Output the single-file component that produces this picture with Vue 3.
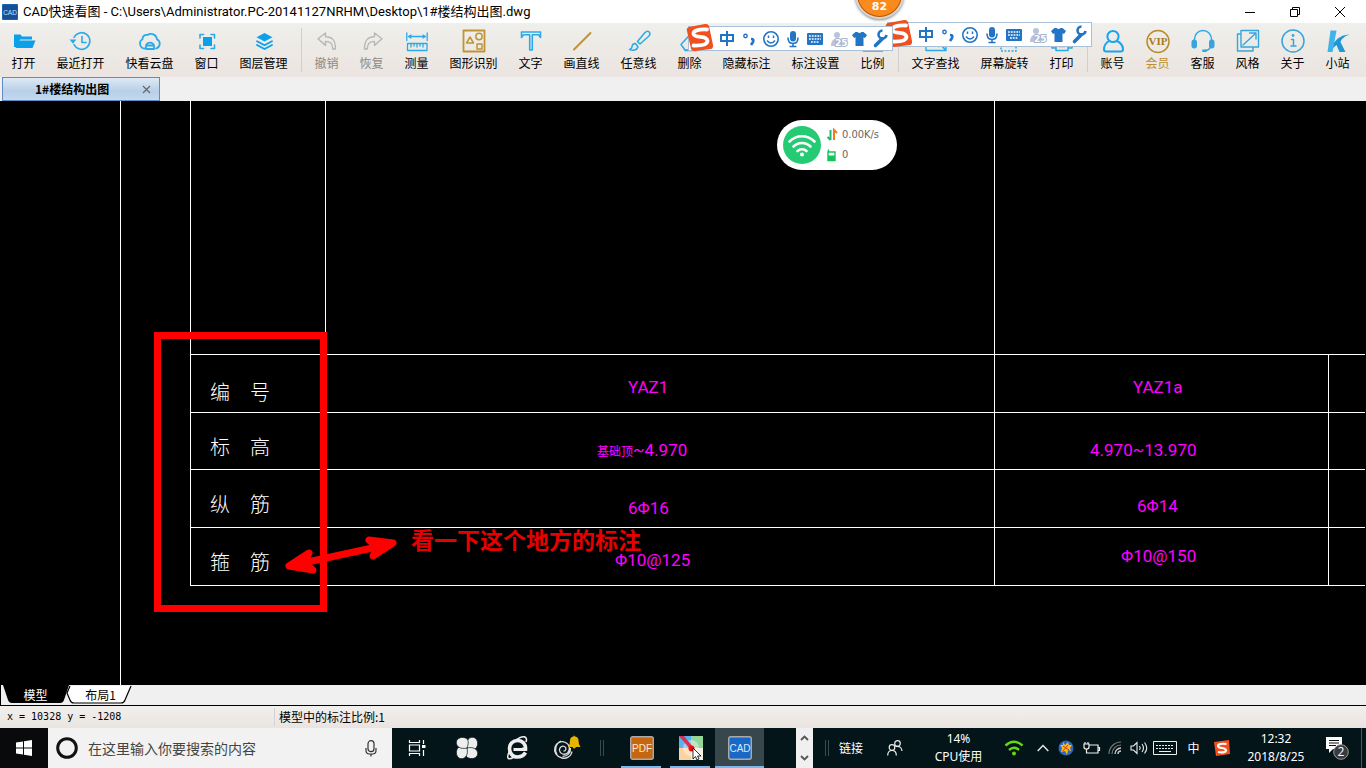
<script setup>
const B = '#2aaae8'
const G = '#bf9436'
const line = (d, c = B, w = 1.6) =>
  `<path d="${d}" fill="none" stroke="${c}" stroke-width="${w}" stroke-linecap="round" stroke-linejoin="round"/>`

const icons = {
  open: '<path d="M2 5.500h6.500l1.500 2h10v3H8L4.500 18H2z" fill="#0ba0ea"/><path d="M6.500 11.500h17L20.500 19H3.500z" fill="#0ba0ea"/>',
  recent: line('M5 8.500a8.300 8.300 0 1 1 0 7M13 7.500v6h4') + '<path d="M.500 10.500h6.800L4 14.800z" fill="#2aaae8"/>',
  cloud: line('M6.500 19.500a5 5 0 0 1-2-9.300a4 4 0 0 1 5-4.200a6 6 0 0 1 9.500 4.200a5 5 0 0 1-1 9.300M8 20v-3.500a4.200 4.200 0 0 1 8 0V20zM8 16.500h8', B, 1.8),
  fit: '<path d="M8 8h9v9H8z" fill="#0ba0ea"/>' + line('M5 9V5.500h3.500M16 5.500h3.500V9M19.500 16v3.500H16M8.500 19.500H5V16', B, 1.6),
  layers: '<path d="M12.500 4l8 4.300-8 4.300-8-4.300z" fill="#0ba0ea"/>' + line('M5 12.300l7.500 4 7.500-4M5 16l7.500 4 7.500-4', '#0ba0ea', 1.8),
  undo: line('M3 9.800L10.500 4v3.800c7 0 10 3.500 10 12.200h-2.800c0-5-2-7.600-7.200-7.600v4z', '#b7b7b5', 1.4),
  redo: line('M22 9.800L14.500 4v3.800c-7 0-10 3.500-10 12.200h2.800c0-5 2-7.600 7.200-7.600v4z', '#b7b7b5', 1.4),
  measure: line('M1.800 4v7.500M22.200 4v7.500M4 7.500h16M6 6L3.500 7.500L6 9M18 6l2.500 1.500L18 9M2.500 14.500h19.500v7H2.500zM6 15v3M9 15v2M12 15v3M15 15v2M18 15v3', B, 1.3),
  shapes: line('M1.500 1.500h21v21h-21z', G, 1.8) + line('M8 8l3.500 6H4.500zM15 15h5v5h-5z', G, 1.5) + `<circle cx="17" cy="7.500" r="3.200" fill="none" stroke="${G}" stroke-width="1.500"/>`,
  text: line('M2.500 3h19v5.500l-2-2.800h-6.200V21h-2.600V5.700H4.500L2.500 8.500z', B, 1.6),
  draw: line('M4 20.500L20.500 4', G, 1.9),
  brush: line('M22 2.800c-1.500-1.300-3-.300-4 .700l-7.500 9 2.500 2.500 9-8c1-1.300 1.500-2.800 0-4.200zM8.500 14.500c-2.500 0-3.500 2-3.500 3.500s-1.500 2-2.500 2.500c3 1.200 7.500 1 8.500-2.500z', B, 1.5),
  erase: line('M3 15.500l10-11 8 7.500-8 9H7zM7 21.500h12', B, 1.5),
  hide: line('M4 20l14-16M6 13l6 7M4.500 20.500v1', B, 1.4),
  setting: line('M5 21l7-16 7 16M9 21l3-5M7 14h10', B, 1.4),
  scale: line('M2.500 4h19v18h-19zM6 16h12', B, 1.6),
  find: line('M2 5h20v16.500H2zM6 12h6M6 16h5', B, 1.4) + `<circle cx="15" cy="14" r="3.500" fill="none" stroke="${B}" stroke-width="1.500"/>` + line('M18 17l3.500 4', B, 1.8),
  rotate: `<rect x="8" y="8" width="15" height="14" fill="none" stroke="${B}" stroke-width="1.500" stroke-dasharray="2 1.500"/>` + line('M2 17h4', B, 1.3),
  print: line('M5 8V3h14v5M5 19H2V9h20v10h-3M6 14h12v7.500H6zM9 17.500h6', B, 1.6),
  user: `<circle cx="12" cy="7.500" r="5.600" fill="none" stroke="#18a5f0" stroke-width="2"/>` + line('M8 12c-3.500 2-5 5-5 8.500 0 1.500 1 2 2.500 2h14c1.500 0 2.500-.500 2.500-2 0-3.500-2-6.500-6-8.500', '#18a5f0', 2),
  vip: `<circle cx="12" cy="12.500" r="11" fill="none" stroke="#b98b2b" stroke-width="1.500"/><text x="12" y="16" text-anchor="middle" font-family="Liberation Serif, serif" font-weight="bold" font-size="11" fill="#a87a1b">VIP</text>`,
  service: line('M3.500 13V10a8.500 8.500 0 0 1 17 0v3M20 17c-1 3-3 4.500-6 4.500', B, 1.5) + '<rect x=".500" y="10.500" width="5.500" height="9" rx="2.700" fill="#37a5dc"/><rect x="18" y="10.500" width="5.500" height="9" rx="2.700" fill="#37a5dc"/><rect x="11" y="20.500" width="5" height="2.600" rx="1.300" fill="#37a5dc"/>',
  style: line('M8 1.500h14.500V18H8M5 5H1.500v17H17v-3M5 1.500V18h3M6 1.500h2M7 16L20 4M13.500 4H20v6', '#37a5dc', 1.4),
  about: '<circle cx="12" cy="12" r="11" fill="none" stroke="#37a5dc" stroke-width="1.500"/><circle cx="12" cy="6.500" r="1.400" fill="#37a5dc"/>' + line('M10.500 10.500h2V17M10 17h5', '#37a5dc', 1.5),
  site: '<path d="M4.500 1.500h6L6.500 23H1.500z" fill="#3fb4ea"/><path d="M8 14C11 9 17 5.500 23.500 5.500C18 7.500 15.500 10 14.500 13L19.500 23h-6L10.500 16L7 19z" fill="#2196d6"/>',
}

const tools = [
  ['open', '打开'], ['recent', '最近打开'], ['cloud', '快看云盘'], ['fit', '窗口'], ['layers', '图层管理'], null,
  ['undo', '撤销', 'off'], ['redo', '恢复', 'off'], ['measure', '测量'], ['shapes', '图形识别'], ['text', '文字'],
  ['draw', '画直线'], ['brush', '任意线'], ['erase', '删除'], ['hide', '隐藏标注'], ['setting', '标注设置'], ['scale', '比例'], null,
  ['find', '文字查找'], ['rotate', '屏幕旋转'], ['print', '打印'], null,
  ['user', '账号'], ['vip', '会员', 'gold'], ['service', '客服'], ['style', '风格'], ['about', '关于'], ['site', '小站'],
]

const rows = [
  { name: '编　号', a: 'YAZ1', b: 'YAZ1a' },
  { name: '标　高', prefix: '基础顶', a: '~4.970', b: '4.970~13.970' },
  { name: '纵　筋', a: '6Φ16', b: '6Φ14' },
  { name: '箍　筋', a: 'Φ10@125', b: 'Φ10@150' },
]
</script>

<template>
  <div class="app">
    <header class="title">
      <svg class="logo" width="16" height="16" viewBox="0 0 16 16">
        <rect width="16" height="16" rx="1" fill="#1565b5" />
        <rect x="1" y="1" width="14" height="14" fill="#1a4f94" />
        <text x="8" y="10.500" text-anchor="middle" font-size="6.500" font-family="Liberation Sans, sans-serif" fill="#bfe0ff">CAD</text>
      </svg>
      <h1>CAD快速看图 - C:\Users\Administrator.PC-20141127NRHM\Desktop\1#楼结构出图.dwg</h1>
      <button class="win" aria-label="最小化"><svg width="12" height="12"><path d="M1 6.500h10" stroke="#000" /></svg></button>
      <button class="win" aria-label="还原"><svg width="12" height="12"><path d="M1.500 3.500h7v7h-7zM3.500 3V1.500h7v7H9" fill="none" stroke="#000" /></svg></button>
      <button class="win" aria-label="关闭"><svg width="12" height="12"><path d="M1 1l10 10M11 1L1 11" stroke="#000" /></svg></button>
    </header>

    <nav class="toolbar">
      <template v-for="(t, i) in tools" :key="i">
        <button v-if="t" class="tool" :class="['n' + t[1].length, t[2]]">
          <svg width="24" height="24" viewBox="0 0 24 24" v-html="icons[t[0]]"></svg>
          <span>{{ t[1] }}</span>
        </button>
        <i v-else class="sep"></i>
      </template>
    </nav>

    <div class="tabs">
      <div class="doc"><span>1#楼结构出图</span>
        <button aria-label="关闭图纸"><svg width="9" height="9"><path d="M1 1l7 7M8 1L1 8" stroke="#666" stroke-width="1.200" /></svg></button>
      </div>
    </div>

    <main class="canvas">
      <i class="axis"></i>
      <table>
        <colgroup><col class="c1" /><col class="c2" /><col class="c3" /><col /></colgroup>
        <tbody>
          <tr class="top"><td></td><td></td><td colspan="2"></td></tr>
          <tr v-for="(r, i) in rows" :key="i" :class="'r' + i">
            <th scope="row">{{ r.name }}</th>
            <td class="a"><small v-if="r.prefix">{{ r.prefix }}</small>{{ r.a }}</td>
            <td class="b">{{ r.b }}</td>
            <td></td>
          </tr>
        </tbody>
      </table>
      <i class="mark"></i>
      <svg class="arrow" width="116" height="40" viewBox="0 0 116 40">
        <path d="M6 30L108 8" stroke="#f00" stroke-width="7" />
        <path d="M26 17L6 30L30 34L21 27zM86 4L110 7L90 20L94 11z" fill="#f00" stroke="#f00" stroke-width="7" stroke-linejoin="round" />
      </svg>
      <p class="note">看一下这个地方的标注</p>
      <div class="net">
        <svg width="38" height="38" viewBox="0 0 38 38">
          <circle cx="19" cy="19" r="19" fill="#25cb73" />
          <path d="M6.500 15.500a17.500 17.500 0 0 1 25 0M10.500 20.500a12 12 0 0 1 17 0M14.500 25a6.500 6.500 0 0 1 9 0" fill="none" stroke="#fff" stroke-width="2.600" stroke-linecap="round" />
          <circle cx="19" cy="28.500" r="2" fill="#fff" />
        </svg>
        <div>
          <p><svg width="10" height="12"><path d="M3.500 1v10M.500 8l3 3" stroke="#25b873" stroke-width="2" fill="none" /><path d="M7 11V1l3 3" stroke="#f47a20" stroke-width="2" fill="none" /></svg>0.00K/s</p>
          <p><svg width="10" height="12"><path d="M1 3h7v8.500H1zM1.500 3V.500" fill="none" stroke="#13c45c" stroke-width="1.400" /><path d="M1 6.500h7v5H1z" fill="#13c45c" /></svg>0</p>
        </div>
      </div>
    </main>

    <div class="sheets">
      <button class="sheet on"><svg width="67" height="19" viewBox="0 0 67 19"><path d="M0 0h66l-5 15q-1 3-4 3H9q-3 0-4-3z" fill="#000" /></svg><span>模型</span></button>
      <button class="sheet two"><svg width="67" height="19" viewBox="0 0 67 19"><path d="M2 1L-1 8l3 7q1 3 4 3h47q3 0 4-3l6-14" fill="#fff" stroke="#000" stroke-width="1.200" /></svg><span>布局1</span></button>
    </div>

    <footer class="status"><span class="xy">x = 10328 y = -1208</span><span class="ratio">模型中的标注比例:1</span></footer>

    <div class="taskbar">
      <button class="start" aria-label="开始"><svg width="16" height="16"><path d="M0 2.500L7 1.500V7.500H0zM8 1.300L16 0V7.500H8zM0 8.500H7V14.500L0 13.500zM8 8.500H16V16L8 14.700z" fill="#fff" /></svg></button>
      <label class="search">
        <svg width="22" height="22"><circle cx="11" cy="11" r="9.300" fill="none" stroke="#111" stroke-width="3" /></svg>
        <input type="text" placeholder="在这里输入你要搜索的内容" aria-label="搜索" />
        <svg width="12" height="17"><rect x="3" y=".700" width="6" height="11" rx="3" fill="none" stroke="#333" stroke-width="1.200" /><path d="M1 8v2.500q0 3.500 3.500 3.500h3q3.500 0 3.500-3.500V8M6 14v2.500" fill="none" stroke="#333" stroke-width="1.200" /></svg>
      </label>
      <button class="pin" aria-label="任务视图"><svg width="18" height="16"><path d="M1.500 0v2.500h10V0M1.500 16v-2.500h10V16M1.500 5h10v6h-10zM15.500 0v4M15.500 10v6" fill="none" stroke="#fff" stroke-width="1.200" /><path d="M14 5h3.500v3H14z" fill="#fff" /></svg></button>
      <button class="pin" aria-label="风扇"><svg width="22" height="22" viewBox="0 0 22 22"><g fill="#eee" stroke="#06141a" stroke-width=".700"><path v-for="k in 4" :key="k" d="M11 11C5 12.500 0 10 .300 5C1 .300 7-.700 10.500 1.500C13 3.500 12.500 7 11 11z" :transform="`rotate(${k * 90} 11 11)`" /></g></svg></button>
      <button class="pin" aria-label="浏览器"><svg width="22" height="24" viewBox="0 0 22 24"><path d="M19.500 16.500C17.500 20 14.500 21 11.500 21C6.500 21 3.500 17 3.500 12.500S7 4.500 11.500 4.500C16.500 4.500 20 8 19.500 13.300H7.500" fill="none" stroke="#eee" stroke-width="3.600" /><path d="M7.500 11h8.500" stroke="#06141a" stroke-width="2" /><path d="M4 14C-1 24 3 24 8 21M10 4C17-1 22 0 20 6" fill="none" stroke="#eee" stroke-width="1.600" /></svg></button>
      <button class="pin" aria-label="提醒"><svg width="30" height="28" viewBox="0 0 30 28"><path d="M20 17.500C19 23 14 25 10 24C4.500 22.500 1.500 18 3 13C4.500 8.500 9 6.500 13.500 8.500C18 10.500 18.500 16 15.500 19C12.500 21.500 8 20 7.500 16.500C7 13.500 10 11.500 12.500 12.500C15 14 14 17 11.500 17M5 20.500C2 15 4 9 9 7M18.500 14C19 19 15 22.500 10.500 22.300" fill="none" stroke="#ddd" stroke-width="1.300" /><path d="M16 13q2-2 2-6.500Q18 3 21.500 2.500Q22 .500 23 2.500Q26.500 3 26.500 6.500Q26.500 11 28.500 13zM20.500 13h3.500q-2 3-3.500 0" fill="#e8b400" /></svg></button>
      <i class="grip g1"></i>
      <button class="run" aria-label="PDF"><svg width="24" height="24"><rect x=".700" y=".700" width="22.600" height="22.600" rx="2" fill="#c76611" stroke="#aaa" stroke-width="1.400" /><text x="12" y="16" text-anchor="middle" font-size="10" font-family="Liberation Sans, sans-serif" fill="#ffe9d0">PDF</text></svg></button>
      <button class="run" aria-label="地图"><svg width="24" height="24"><path d="M0 0h12v12H0z" fill="#58b2f0" /><path d="M12 0h12v12H12z" fill="#92d69a" /><path d="M0 12h12v12H0z" fill="#fbd2a0" /><path d="M12 12h12v12H12z" fill="#eef0e4" /><circle cx="12" cy="12" r="8" fill="#fff" opacity=".4" /><path d="M0 0h5L14 11l-3 2z" fill="#d8324f" /><circle cx="12.500" cy="12.500" r="3" fill="#f00d12" /><path d="M14 12v11l2.500-2.500L18 24l2-1-1.500-3H22z" fill="#fff" stroke="#000" stroke-width=".800" /></svg></button>
      <button class="run live" aria-label="CAD"><svg width="24" height="24"><rect x=".700" y=".700" width="22.600" height="22.600" rx="2" fill="#1869c5" stroke="#aaa" stroke-width="1.400" /><text x="12" y="16" text-anchor="middle" font-size="10" font-family="Liberation Sans, sans-serif" fill="#d8ecff">CAD</text></svg></button>
      <div class="roll">
        <button aria-label="上一行"><svg width="9" height="6"><path d="M1 5l3.500-3.500L8 5" fill="none" stroke="#555" stroke-width="1.800" /></svg></button>
        <button aria-label="下一行"><svg width="9" height="6"><path d="M1 1l3.500 3.500L8 1" fill="none" stroke="#555" stroke-width="1.800" /></svg></button>
      </div>
      <i class="grip g2"></i>
      <a class="links" href="#">链接</a>
      <button class="tray w56" aria-label="人脉"><svg width="16" height="16" fill="none" stroke="#eee" stroke-width="1.200"><circle cx="5" cy="7.500" r="2.800" /><path d="M.700 15.500q0-5 4.300-5t4.300 5" /><circle cx="10.500" cy="3.500" r="2.800" /><path d="M8.500 6.500q6-1 6.500 4.500" /></svg></button>
      <div class="two-line w71"><span>14%</span><span>CPU使用</span></div>
      <button class="tray w40" aria-label="无线"><svg width="20" height="18" fill="none" stroke="#63d80e" stroke-width="2.400"><path d="M1.500 6.500q8.500-7.500 17 0M5 11q5-4.500 10 0" /><circle cx="10" cy="14.500" r="2" fill="#63d80e" stroke="none" /></svg></button>
      <button class="tray w18" aria-label="更多"><svg width="12" height="8"><path d="M.700 7L6 1.500L11.300 7" fill="none" stroke="#eee" stroke-width="1.300" /></svg></button>
      <button class="tray w27" aria-label="管家"><svg width="16" height="16"><circle cx="8" cy="8" r="7.500" fill="#2c68bd" /><path d="M5 2l2 3 3-3 1 3h3l-2 3 1 3-3-1-1 5-2-4-4 1 1-4-2-3h3z" fill="#ffb51e" /><path d="M5 6l6 4M10 5L5 11" stroke="#c54708" /></svg></button>
      <button class="tray w24" aria-label="电源"><svg width="17" height="14" fill="none" stroke="#eee" stroke-width="1.200"><path d="M6 4h9v8H6M15.500 6.500h1v3h-1M1 3h5v3q0 2-2.500 2T1 6zM2 3V1M5 3V1M3.500 8v4H6" /></svg></button>
      <button class="tray w24" aria-label="网络"><svg width="14" height="14" fill="none"><path d="M1 13A12 12 0 0 1 13 1M4 13a9 9 0 0 1 9-9" stroke="#777" stroke-width="1.200" /><path d="M7 13a6 6 0 0 1 6-6M10 13a3 3 0 0 1 3-3" stroke="#ccc" stroke-width="1.300" /></svg></button>
      <button class="tray w23" aria-label="音量"><svg width="18" height="14" fill="none" stroke="#eee" stroke-width="1.100"><path d="M1 5h2.500L7 1.500v11L3.500 9H1zM9.500 5q1.500 2 0 4M12 3q3 4 0 8M14.500 1.500q4.500 5.500 0 11" /></svg></button>
      <button class="tray w30" aria-label="键盘"><svg width="24" height="14" fill="none" stroke="#eee"><path d="M.500.500h23v13H.500z" /><path d="M3 4.500h18M3 7.500h18" stroke-dasharray="2 1" /><path d="M6 10.500h12" /></svg></button>
      <button class="tray w27">中</button>
      <button class="tray w30" aria-label="搜狗"><svg width="16" height="16"><path d="M0 2L15 0l1 14-14 2z" fill="#f4501e" /><path d="M12.500 4Q4 3 4 6q0 1.500 4 2t4 2.500q0 2.500-8 1.500" fill="none" stroke="#fff" stroke-width="2.200" /></svg></button>
      <div class="two-line w78"><span>12:32</span><span>2018/8/25</span></div>
      <button class="tray w46" aria-label="通知"><svg width="26" height="24"><path d="M1 1h16v12H8l-4 4v-4H1z" fill="#fff" /><path d="M4 4.500h10M4 7h10M4 9.500h7" stroke="#111" /><circle cx="16" cy="16" r="7.300" fill="#3b3b3b" stroke="#999" /><text x="16" y="20" text-anchor="middle" font-size="12" font-family="Open Sans, sans-serif" fill="#fff">2</text></svg></button>
      <i class="peek"></i>
    </div>

    <div v-for="n in 2" :key="n" class="ime" :class="'ime' + n">
      <svg class="sogou" width="30" height="30" viewBox="0 0 30 30"><path d="M2 8Q1 5 4 4L20 1q3-.500 4 2l4 19q.500 3-2 4L10 28q-3 .500-4-2z" fill="#f0501f" /><path d="M22 6.500Q8 6 8.500 11q.500 2.500 7 2.800t7 4.200q-.500 5-14 4.500" fill="none" stroke="#fff" stroke-width="3.800" stroke-linecap="round" /></svg>
      <svg class="glyphs" width="172" height="22" viewBox="0 0 172 22" fill="none" stroke="#2274c4" stroke-width="2">
        <path d="M4 7h12v6H4zM10 3v15" />
        <circle cx="28.500" cy="8" r="1.700" stroke-width="1.400" /><path d="M34 11q3.500 0 2 3l-2 3" stroke-width="2.600" />
        <circle cx="54" cy="11" r="7.200" stroke-width="1.600" /><path d="M51.500 7.500v2.500M56.500 7.500v2.500M50 12.500q4 5 8 0" stroke-width="1.500" />
        <rect x="73" y="3" width="6" height="10.500" rx="3" fill="#2274c4" stroke="none" /><path d="M71 9.500q0 6 5 6t5-6M76 15v3.500M72.500 18.500h7" stroke-width="1.600" />
        <rect x="90" y="5" width="16" height="12" rx="1" fill="#2274c4" stroke="none" /><path d="M92 8h12M92 11h12M94 14h8" stroke="#fff" stroke-width="1.400" stroke-dasharray="1.800 1" />
        <g stroke="none" fill="#b9c3da"><circle cx="120" cy="7" r="3" /><path d="M114 18q0-7.500 6-7.500t6 3V18z" /><text x="118" y="18" font-size="9" font-weight="bold" font-family="DejaVu Sans, sans-serif" fill="#fff" stroke="#aab4cf" stroke-width="2" paint-order="stroke">25</text></g>
        <path d="M138.500 4l-3.500 3 2 3 1.500-.700V18h8V9.300l1.500.700 2-3-3.500-3h-2q-2 2-4 0z" fill="#2274c4" stroke="none" />
        <path d="M158.500 17.500L165 11" stroke-width="3.600" stroke-linecap="round" /><path d="M169.500 7a4 4 0 1 1-4-4.500" stroke-width="2.600" />
      </svg>
    </div>
    <div class="ball">82</div>
  </div>
</template>

<style>
html, body { margin: 0; background: #000; }
</style>

<style scoped>
* { box-sizing: border-box; }
.app { position: relative; display: flex; flex-direction: column; min-height: 100vh; overflow: hidden; font: 12px/14px "Noto Sans CJK SC", sans-serif; color: #000; background: #f0f0f0; }
button { border: 0; padding: 0; margin: 0; background: none; font: inherit; color: inherit; display: flex; align-items: center; justify-content: center; }
svg { display: block; flex: none; overflow: visible; }
p { margin: 0; }
.title { display: flex; align-items: center; height: 23px; background: #fff; padding: 0 4px 0 2px; flex: none; }
.title h1 { flex: 1; margin: 0 0 0 5px; font: 13px/22px Roboto, "Noto Sans CJK SC", sans-serif; white-space: nowrap; }
.win { width: 45px; height: 20px; }
.toolbar { display: flex; flex: none; height: 54px; padding-left: 1px; background: linear-gradient(#efefeb, #ebe4e0); white-space: nowrap; }
.tool { flex: none; flex-direction: column; justify-content: flex-start; padding-top: 6px; gap: 3px; width: 45px; }
.n3 { width: 57px; }
.n4 { width: 69px; }
.off { color: #8a8a88; }
.gold { color: #bd8f2e; }
.sep { flex: none; width: 1px; margin: 5px 2px 5px 3px; background: #cfcfd1; }
.tabs { flex: none; height: 24px; padding-left: 2px; background: #f0f0f0; }
.doc { display: flex; align-items: center; justify-content: space-between; width: 158px; height: 24px; padding: 0 8px 0 32px; border: 1px solid #5f8cc4; background: linear-gradient(#dfe9f5, #b7cfe8 60%, #c6d9ee); font-weight: bold; }
.canvas { position: relative; flex: 1 0 auto; background: #000; border-left: 1px solid #000; padding: 0 1px 0 189px; }
.axis { position: absolute; left: 119px; top: 0; bottom: 0; width: 1px; background: #fff; }
table { width: 100%; border-collapse: collapse; table-layout: fixed; margin-bottom: 99px; color: #f0f; font: 17px/24px Roboto, "Noto Sans CJK SC", sans-serif; }
small { font-size: 12px; }
.c1 { width: 135px; }
.c2 { width: 669px; }
.c3 { width: 334px; }
td, th { padding: 0; border: 1px solid #fff; border-right: 0; vertical-align: top; text-align: left; }
tr { height: 58px; }
.r1 { height: 57px; }
.top { height: 253px; }
.top td { border-top: 0; }
th { padding: 26px 0 0 19px; color: #fff; font-size: 20px; font-weight: 300; }
.r1 th, .r2 th, .r3 th { padding-top: 23px; }
.a { padding: 20px 0 0 302px; }
.b { padding: 20px 0 0 138px; }
.r1 .a { padding: 25px 0 0 271px; }
.r1 .b { padding: 25px 0 0 95px; }
.r2 .a { padding-top: 26px; }
.r2 .b { padding: 24px 0 0 142px; }
.r3 .a { padding: 20px 0 0 289px; }
.r3 .b { padding: 16px 0 0 126px; }
.mark { position: absolute; left: 153px; top: 231px; width: 173px; height: 280px; border: 7px solid #f00; }
.arrow { position: absolute; left: 282px; top: 435px; }
.note { position: absolute; left: 410px; top: 424px; font: bold 23px/28px "Noto Sans CJK SC", serif; color: #e60000; white-space: nowrap; }
.net { position: absolute; left: 776px; top: 19px; display: flex; align-items: center; gap: 6px; width: 120px; height: 50px; padding-left: 6px; border-radius: 25px; background: #fff; color: #666; font: 11px/20px "DejaVu Sans Condensed", "DejaVu Sans", sans-serif; }
.net p { display: flex; align-items: center; gap: 5px; }
.sheets { display: flex; flex: none; height: 21px; padding-left: 2px; border-left: 1px solid #000; border-bottom: 1px solid #000; background: #f0f0f0; }
.sheet { position: relative; width: 65px; height: 19px; }
.sheet svg { position: absolute; left: 0; top: 0; }
.sheet span { position: relative; }
.on { color: #fff; z-index: 1; }
.status { display: flex; flex: none; align-items: center; height: 22px; background: linear-gradient(#f1f0ed, #eae4e0); }
.xy { width: 275px; padding-left: 7px; font: 10px/18px "DejaVu Sans Mono", monospace; border-right: 1px solid #d2d2d2; }
.ratio { padding-left: 4px; }
.taskbar { display: flex; flex: none; height: 40px; background: #04151a; color: #fff; white-space: nowrap; }
.start { width: 48px; background: #080a0b; }
.search { display: flex; align-items: center; width: 344px; padding: 0 15px 0 8px; background: #f2f2f2; }
.search input { flex: 1; min-width: 0; margin-left: 10px; padding: 0; border: 0; outline: 0; background: none; font: 14px/20px "Noto Sans CJK SC", sans-serif; color: #333; }
.search input::placeholder { color: #444; opacity: 1; }
.pin { width: 50px; }
.grip { width: 4px; height: 16px; align-self: center; border: solid #3c484c; border-width: 0 1px; }
.g1 { margin: 0 13px 0 8px; }
.g2 { margin: 0 6px 0 12px; }
.run { width: 49px; position: relative; }
.run::after { content: ""; position: absolute; left: 4px; right: 5px; bottom: 0; height: 2px; background: #76b9ed; }
.live { background: #38474c; }
.live::after { left: 0; right: 0; }
.roll { display: flex; flex-direction: column; justify-content: space-around; align-items: center; width: 17px; margin-left: auto; background: #f0f0f0; }
.roll button { height: 18px; }
.links { width: 32px; color: #fff; text-decoration: none; line-height: 40px; text-align: center; }
.tray { flex: none; }
.two-line { display: flex; flex-direction: column; justify-content: center; align-items: center; font: 12px/18px "Noto Sans", "Noto Sans CJK SC", sans-serif; }
.w18 { width: 18px; }
.w23 { width: 23px; }
.w24 { width: 24px; }
.w27 { width: 27px; }
.w30 { width: 30px; }
.w40 { width: 40px; }
.w46 { width: 46px; }
.w56 { width: 56px; }
.w71 { width: 71px; }
.w78 { width: 78px; }
.peek { width: 5px; border-left: 1px solid #555; }
.ime { position: absolute; width: 205px; height: 25px; border: 1px solid #a9c1d8; background: #fff; }
.ime1 { left: 688px; top: 26px; z-index: 2; }
.ime2 { left: 887px; top: 22px; z-index: 1; }
.sogou { position: absolute; left: -4px; top: -4px; }
.glyphs { position: absolute; left: 28px; top: 1px; }
.ball { position: absolute; left: 855px; top: -30px; z-index: 3; width: 49px; height: 49px; padding-top: 26px; border: 2px solid #d8d4d2; border-radius: 50%; background: #fb8a1c; box-shadow: inset 0 0 0 1px #a55a17, 0 1px 3px #888; color: #fff; text-align: center; font: bold 11px/18px "DejaVu Sans", sans-serif; }
</style>
